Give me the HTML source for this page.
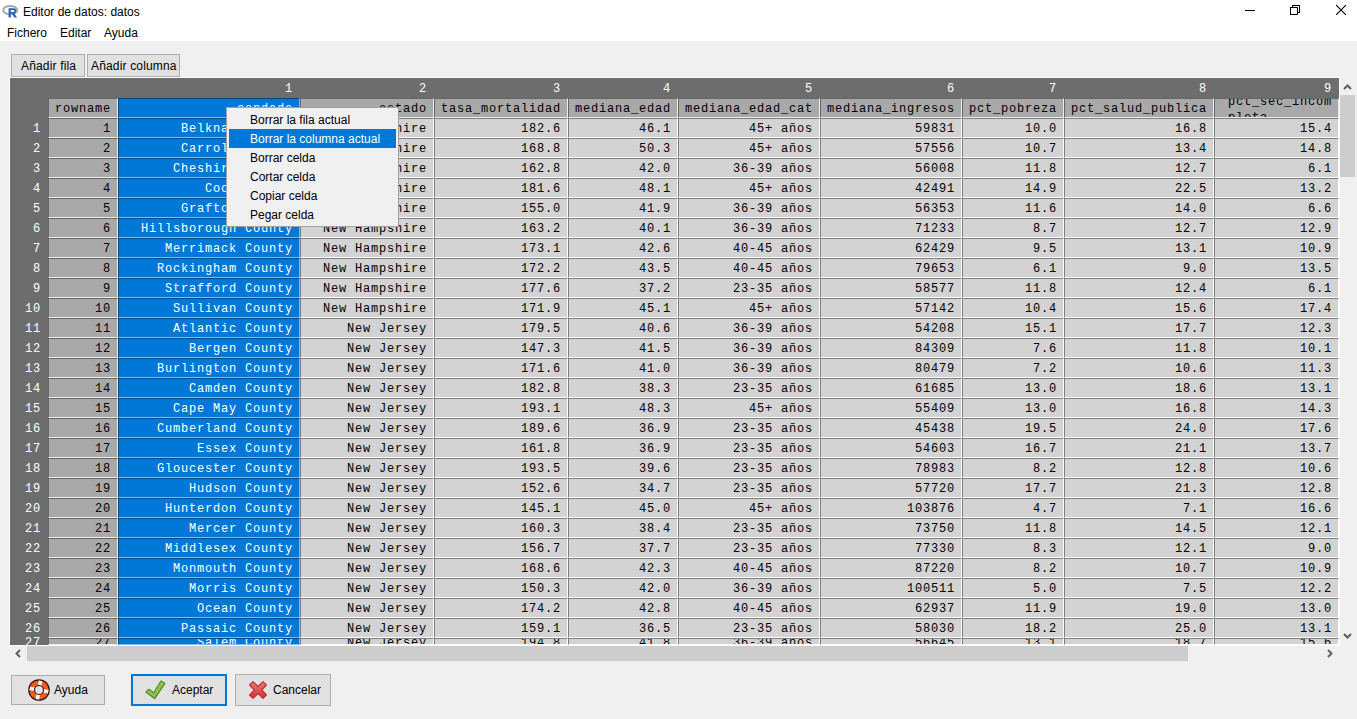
<!DOCTYPE html>
<html><head><meta charset="utf-8"><title>Editor de datos: datos</title>
<style>
html,body{margin:0;padding:0;width:1357px;height:719px;overflow:hidden;background:#f0f0f0;position:relative;font-family:"Liberation Sans",sans-serif;font-size:12px;color:#000}
.abs{position:absolute}
#top{position:absolute;left:0;top:0;width:1357px;height:41px;background:#fff}
.ui{position:absolute;line-height:20px;white-space:nowrap}
.ls{letter-spacing:0.16px}
.btn{position:absolute;box-sizing:border-box;background:#e1e1e1;border:1px solid #adadad}
#grid{position:absolute;left:9px;top:77px;width:1329px;height:567px;border:1px solid #fff;background:#6d6d6d;overflow:hidden}
.c{position:absolute;border:1px solid;font-family:"Liberation Mono",monospace;font-size:12px;letter-spacing:0.8px;line-height:20px;text-align:right;padding-right:0;white-space:nowrap;overflow:hidden}
.c{box-sizing:content-box}
.t{position:absolute;font-family:"Liberation Mono",monospace;font-size:12px;letter-spacing:0.8px;line-height:20px;text-align:right;white-space:nowrap}
.w{color:#fff}
.r27{line-height:8px}
.wrap{position:absolute;right:6px;top:-5px;line-height:16px;text-align:left}
#menu{position:absolute;left:226px;top:107px;width:171px;height:118px;background:#f0f0f0;border:1px solid #a0a0a0}
.mi{position:absolute;left:2px;width:167px;height:19px;line-height:21px;padding-left:21px;box-sizing:border-box;white-space:nowrap}
.mi.sel{background:#0078d7;color:#fff}
.sb{position:absolute;background:#cdcdcd}
</style></head><body>
<div id="top"></div>
<!-- R logo -->
<svg class="abs" style="left:2px;top:5px" width="17" height="13" viewBox="0 0 17 13">
<ellipse cx="8.2" cy="5.2" rx="7" ry="4.2" fill="none" stroke="#a9a9ab" stroke-width="2"/>
<path d="M6.6 3.3 h5.2 a2.6 2.6 0 0 1 0.6 5.1 l2.6 4.2 h-2.7 l-2.3 -4 h-1.2 v4 h-2.2 z M8.8 5 v2 h2.6 a1 1 0 0 0 0 -2 z" fill="#1f63c0" fill-rule="evenodd"/>
</svg>
<div class="ui" style="left:23px;top:2px">Editor de datos: datos</div>
<!-- window controls -->
<div class="abs" style="left:1245px;top:10px;width:10px;height:1px;background:#000"></div>
<div class="abs" style="left:1292px;top:5px;width:6px;height:6px;border:1px solid #000"></div>
<div class="abs" style="left:1290px;top:7px;width:6px;height:6px;border:1px solid #000;background:#fff"></div>
<svg class="abs" style="left:1336px;top:5px" width="10" height="10" viewBox="0 0 10 10"><path d="M0 0 L10 10 M10 0 L0 10" stroke="#000" stroke-width="1.1"/></svg>
<!-- menu bar -->
<div class="ui" style="left:7px;top:23px">Fichero</div>
<div class="ui" style="left:60px;top:23px">Editar</div>
<div class="ui" style="left:104px;top:23px">Ayuda</div>
<!-- toolbar -->
<div class="btn" style="left:11px;top:54px;width:74px;height:23px"></div>
<div class="ui ls" style="left:21px;top:56px">Añadir fila</div>
<div class="btn" style="left:87px;top:54px;width:93px;height:23px"></div>
<div class="ui ls" style="left:91px;top:56px">Añadir columna</div>
<!-- grid -->
<div id="grid">
<div class="t w" style="left:108px;top:1px;width:175px">1</div>
<div class="t w" style="left:290px;top:1px;width:127px">2</div>
<div class="t w" style="left:424px;top:1px;width:127px">3</div>
<div class="t w" style="left:558px;top:1px;width:103px">4</div>
<div class="t w" style="left:668px;top:1px;width:135px">5</div>
<div class="t w" style="left:810px;top:1px;width:135px">6</div>
<div class="t w" style="left:952px;top:1px;width:95px">7</div>
<div class="t w" style="left:1054px;top:1px;width:143px">8</div>
<div class="t w" style="left:1204px;top:1px;width:118px">9</div>
<div class="t w" style="left:0px;top:41px;width:31px">1</div>
<div class="t w" style="left:0px;top:61px;width:31px">2</div>
<div class="t w" style="left:0px;top:81px;width:31px">3</div>
<div class="t w" style="left:0px;top:101px;width:31px">4</div>
<div class="t w" style="left:0px;top:121px;width:31px">5</div>
<div class="t w" style="left:0px;top:141px;width:31px">6</div>
<div class="t w" style="left:0px;top:161px;width:31px">7</div>
<div class="t w" style="left:0px;top:181px;width:31px">8</div>
<div class="t w" style="left:0px;top:201px;width:31px">9</div>
<div class="t w" style="left:0px;top:221px;width:31px">10</div>
<div class="t w" style="left:0px;top:241px;width:31px">11</div>
<div class="t w" style="left:0px;top:261px;width:31px">12</div>
<div class="t w" style="left:0px;top:281px;width:31px">13</div>
<div class="t w" style="left:0px;top:301px;width:31px">14</div>
<div class="t w" style="left:0px;top:321px;width:31px">15</div>
<div class="t w" style="left:0px;top:341px;width:31px">16</div>
<div class="t w" style="left:0px;top:361px;width:31px">17</div>
<div class="t w" style="left:0px;top:381px;width:31px">18</div>
<div class="t w" style="left:0px;top:401px;width:31px">19</div>
<div class="t w" style="left:0px;top:421px;width:31px">20</div>
<div class="t w" style="left:0px;top:441px;width:31px">21</div>
<div class="t w" style="left:0px;top:461px;width:31px">22</div>
<div class="t w" style="left:0px;top:481px;width:31px">23</div>
<div class="t w" style="left:0px;top:501px;width:31px">24</div>
<div class="t w" style="left:0px;top:521px;width:31px">25</div>
<div class="t w" style="left:0px;top:541px;width:31px">26</div>
<div class="t w" style="left:0px;top:561px;width:31px;line-height:8px">27</div>
<div class="c " style="left:38px;top:20px;width:62px;height:18px;padding-right:6px;background:#a9a9a9;border-color:#656565 #ececec #ececec #656565;color:#000">rowname</div>
<div class="c " style="left:108px;top:20px;width:174px;height:18px;padding-right:6px;background:#0078d7;border-color:#004881 #7fbbff #7fbbff #004881;color:#fff">condado</div>
<div class="c " style="left:290px;top:20px;width:126px;height:18px;padding-right:6px;background:#a9a9a9;border-color:#656565 #ececec #ececec #656565;color:#000">estado</div>
<div class="c " style="left:424px;top:20px;width:126px;height:18px;padding-right:6px;background:#a9a9a9;border-color:#656565 #ececec #ececec #656565;color:#000">tasa_mortalidad</div>
<div class="c " style="left:558px;top:20px;width:102px;height:18px;padding-right:6px;background:#a9a9a9;border-color:#656565 #ececec #ececec #656565;color:#000">mediana_edad</div>
<div class="c " style="left:668px;top:20px;width:134px;height:18px;padding-right:6px;background:#a9a9a9;border-color:#656565 #ececec #ececec #656565;color:#000">mediana_edad_cat</div>
<div class="c " style="left:810px;top:20px;width:134px;height:18px;padding-right:6px;background:#a9a9a9;border-color:#656565 #ececec #ececec #656565;color:#000">mediana_ingresos</div>
<div class="c " style="left:952px;top:20px;width:94px;height:18px;padding-right:6px;background:#a9a9a9;border-color:#656565 #ececec #ececec #656565;color:#000">pct_pobreza</div>
<div class="c " style="left:1054px;top:20px;width:142px;height:18px;padding-right:6px;background:#a9a9a9;border-color:#656565 #ececec #ececec #656565;color:#000">pct_salud_publica</div>
<div class="c" style="left:1204px;top:20px;width:123px;height:18px;background:#a9a9a9;border-color:#656565 #ececec #ececec #656565;color:#000"><div class="wrap">pct_sec_incom<br>pleta</div></div>
<div class="c " style="left:38px;top:40px;width:62px;height:18px;padding-right:6px;background:#a9a9a9;border-color:#656565 #ececec #ececec #656565;color:#000">1</div>
<div class="c " style="left:108px;top:40px;width:174px;height:18px;padding-right:6px;background:#0078d7;border-color:#004881 #7fbbff #7fbbff #004881;color:#fff">Belknap County</div>
<div class="c " style="left:290px;top:40px;width:126px;height:18px;padding-right:6px;background:#d3d3d3;border-color:#7e7e7e #ffffff #ffffff #7e7e7e;color:#000">New Hampshire</div>
<div class="c " style="left:424px;top:40px;width:126px;height:18px;padding-right:6px;background:#d3d3d3;border-color:#7e7e7e #ffffff #ffffff #7e7e7e;color:#000">182.6</div>
<div class="c " style="left:558px;top:40px;width:102px;height:18px;padding-right:6px;background:#d3d3d3;border-color:#7e7e7e #ffffff #ffffff #7e7e7e;color:#000">46.1</div>
<div class="c " style="left:668px;top:40px;width:134px;height:18px;padding-right:6px;background:#d3d3d3;border-color:#7e7e7e #ffffff #ffffff #7e7e7e;color:#000">45+ años</div>
<div class="c " style="left:810px;top:40px;width:134px;height:18px;padding-right:6px;background:#d3d3d3;border-color:#7e7e7e #ffffff #ffffff #7e7e7e;color:#000">59831</div>
<div class="c " style="left:952px;top:40px;width:94px;height:18px;padding-right:6px;background:#d3d3d3;border-color:#7e7e7e #ffffff #ffffff #7e7e7e;color:#000">10.0</div>
<div class="c " style="left:1054px;top:40px;width:142px;height:18px;padding-right:6px;background:#d3d3d3;border-color:#7e7e7e #ffffff #ffffff #7e7e7e;color:#000">16.8</div>
<div class="c " style="left:1204px;top:40px;width:117px;height:18px;padding-right:6px;background:#d3d3d3;border-color:#7e7e7e #ffffff #ffffff #7e7e7e;color:#000">15.4</div>
<div class="c " style="left:38px;top:60px;width:62px;height:18px;padding-right:6px;background:#a9a9a9;border-color:#656565 #ececec #ececec #656565;color:#000">2</div>
<div class="c " style="left:108px;top:60px;width:174px;height:18px;padding-right:6px;background:#0078d7;border-color:#004881 #7fbbff #7fbbff #004881;color:#fff">Carroll County</div>
<div class="c " style="left:290px;top:60px;width:126px;height:18px;padding-right:6px;background:#d3d3d3;border-color:#7e7e7e #ffffff #ffffff #7e7e7e;color:#000">New Hampshire</div>
<div class="c " style="left:424px;top:60px;width:126px;height:18px;padding-right:6px;background:#d3d3d3;border-color:#7e7e7e #ffffff #ffffff #7e7e7e;color:#000">168.8</div>
<div class="c " style="left:558px;top:60px;width:102px;height:18px;padding-right:6px;background:#d3d3d3;border-color:#7e7e7e #ffffff #ffffff #7e7e7e;color:#000">50.3</div>
<div class="c " style="left:668px;top:60px;width:134px;height:18px;padding-right:6px;background:#d3d3d3;border-color:#7e7e7e #ffffff #ffffff #7e7e7e;color:#000">45+ años</div>
<div class="c " style="left:810px;top:60px;width:134px;height:18px;padding-right:6px;background:#d3d3d3;border-color:#7e7e7e #ffffff #ffffff #7e7e7e;color:#000">57556</div>
<div class="c " style="left:952px;top:60px;width:94px;height:18px;padding-right:6px;background:#d3d3d3;border-color:#7e7e7e #ffffff #ffffff #7e7e7e;color:#000">10.7</div>
<div class="c " style="left:1054px;top:60px;width:142px;height:18px;padding-right:6px;background:#d3d3d3;border-color:#7e7e7e #ffffff #ffffff #7e7e7e;color:#000">13.4</div>
<div class="c " style="left:1204px;top:60px;width:117px;height:18px;padding-right:6px;background:#d3d3d3;border-color:#7e7e7e #ffffff #ffffff #7e7e7e;color:#000">14.8</div>
<div class="c " style="left:38px;top:80px;width:62px;height:18px;padding-right:6px;background:#a9a9a9;border-color:#656565 #ececec #ececec #656565;color:#000">3</div>
<div class="c " style="left:108px;top:80px;width:174px;height:18px;padding-right:6px;background:#0078d7;border-color:#004881 #7fbbff #7fbbff #004881;color:#fff">Cheshire County</div>
<div class="c " style="left:290px;top:80px;width:126px;height:18px;padding-right:6px;background:#d3d3d3;border-color:#7e7e7e #ffffff #ffffff #7e7e7e;color:#000">New Hampshire</div>
<div class="c " style="left:424px;top:80px;width:126px;height:18px;padding-right:6px;background:#d3d3d3;border-color:#7e7e7e #ffffff #ffffff #7e7e7e;color:#000">162.8</div>
<div class="c " style="left:558px;top:80px;width:102px;height:18px;padding-right:6px;background:#d3d3d3;border-color:#7e7e7e #ffffff #ffffff #7e7e7e;color:#000">42.0</div>
<div class="c " style="left:668px;top:80px;width:134px;height:18px;padding-right:6px;background:#d3d3d3;border-color:#7e7e7e #ffffff #ffffff #7e7e7e;color:#000">36-39 años</div>
<div class="c " style="left:810px;top:80px;width:134px;height:18px;padding-right:6px;background:#d3d3d3;border-color:#7e7e7e #ffffff #ffffff #7e7e7e;color:#000">56008</div>
<div class="c " style="left:952px;top:80px;width:94px;height:18px;padding-right:6px;background:#d3d3d3;border-color:#7e7e7e #ffffff #ffffff #7e7e7e;color:#000">11.8</div>
<div class="c " style="left:1054px;top:80px;width:142px;height:18px;padding-right:6px;background:#d3d3d3;border-color:#7e7e7e #ffffff #ffffff #7e7e7e;color:#000">12.7</div>
<div class="c " style="left:1204px;top:80px;width:117px;height:18px;padding-right:6px;background:#d3d3d3;border-color:#7e7e7e #ffffff #ffffff #7e7e7e;color:#000">6.1</div>
<div class="c " style="left:38px;top:100px;width:62px;height:18px;padding-right:6px;background:#a9a9a9;border-color:#656565 #ececec #ececec #656565;color:#000">4</div>
<div class="c " style="left:108px;top:100px;width:174px;height:18px;padding-right:6px;background:#0078d7;border-color:#004881 #7fbbff #7fbbff #004881;color:#fff">Coos County</div>
<div class="c " style="left:290px;top:100px;width:126px;height:18px;padding-right:6px;background:#d3d3d3;border-color:#7e7e7e #ffffff #ffffff #7e7e7e;color:#000">New Hampshire</div>
<div class="c " style="left:424px;top:100px;width:126px;height:18px;padding-right:6px;background:#d3d3d3;border-color:#7e7e7e #ffffff #ffffff #7e7e7e;color:#000">181.6</div>
<div class="c " style="left:558px;top:100px;width:102px;height:18px;padding-right:6px;background:#d3d3d3;border-color:#7e7e7e #ffffff #ffffff #7e7e7e;color:#000">48.1</div>
<div class="c " style="left:668px;top:100px;width:134px;height:18px;padding-right:6px;background:#d3d3d3;border-color:#7e7e7e #ffffff #ffffff #7e7e7e;color:#000">45+ años</div>
<div class="c " style="left:810px;top:100px;width:134px;height:18px;padding-right:6px;background:#d3d3d3;border-color:#7e7e7e #ffffff #ffffff #7e7e7e;color:#000">42491</div>
<div class="c " style="left:952px;top:100px;width:94px;height:18px;padding-right:6px;background:#d3d3d3;border-color:#7e7e7e #ffffff #ffffff #7e7e7e;color:#000">14.9</div>
<div class="c " style="left:1054px;top:100px;width:142px;height:18px;padding-right:6px;background:#d3d3d3;border-color:#7e7e7e #ffffff #ffffff #7e7e7e;color:#000">22.5</div>
<div class="c " style="left:1204px;top:100px;width:117px;height:18px;padding-right:6px;background:#d3d3d3;border-color:#7e7e7e #ffffff #ffffff #7e7e7e;color:#000">13.2</div>
<div class="c " style="left:38px;top:120px;width:62px;height:18px;padding-right:6px;background:#a9a9a9;border-color:#656565 #ececec #ececec #656565;color:#000">5</div>
<div class="c " style="left:108px;top:120px;width:174px;height:18px;padding-right:6px;background:#0078d7;border-color:#004881 #7fbbff #7fbbff #004881;color:#fff">Grafton County</div>
<div class="c " style="left:290px;top:120px;width:126px;height:18px;padding-right:6px;background:#d3d3d3;border-color:#7e7e7e #ffffff #ffffff #7e7e7e;color:#000">New Hampshire</div>
<div class="c " style="left:424px;top:120px;width:126px;height:18px;padding-right:6px;background:#d3d3d3;border-color:#7e7e7e #ffffff #ffffff #7e7e7e;color:#000">155.0</div>
<div class="c " style="left:558px;top:120px;width:102px;height:18px;padding-right:6px;background:#d3d3d3;border-color:#7e7e7e #ffffff #ffffff #7e7e7e;color:#000">41.9</div>
<div class="c " style="left:668px;top:120px;width:134px;height:18px;padding-right:6px;background:#d3d3d3;border-color:#7e7e7e #ffffff #ffffff #7e7e7e;color:#000">36-39 años</div>
<div class="c " style="left:810px;top:120px;width:134px;height:18px;padding-right:6px;background:#d3d3d3;border-color:#7e7e7e #ffffff #ffffff #7e7e7e;color:#000">56353</div>
<div class="c " style="left:952px;top:120px;width:94px;height:18px;padding-right:6px;background:#d3d3d3;border-color:#7e7e7e #ffffff #ffffff #7e7e7e;color:#000">11.6</div>
<div class="c " style="left:1054px;top:120px;width:142px;height:18px;padding-right:6px;background:#d3d3d3;border-color:#7e7e7e #ffffff #ffffff #7e7e7e;color:#000">14.0</div>
<div class="c " style="left:1204px;top:120px;width:117px;height:18px;padding-right:6px;background:#d3d3d3;border-color:#7e7e7e #ffffff #ffffff #7e7e7e;color:#000">6.6</div>
<div class="c " style="left:38px;top:140px;width:62px;height:18px;padding-right:6px;background:#a9a9a9;border-color:#656565 #ececec #ececec #656565;color:#000">6</div>
<div class="c " style="left:108px;top:140px;width:174px;height:18px;padding-right:6px;background:#0078d7;border-color:#004881 #7fbbff #7fbbff #004881;color:#fff">Hillsborough County</div>
<div class="c " style="left:290px;top:140px;width:126px;height:18px;padding-right:6px;background:#d3d3d3;border-color:#7e7e7e #ffffff #ffffff #7e7e7e;color:#000">New Hampshire</div>
<div class="c " style="left:424px;top:140px;width:126px;height:18px;padding-right:6px;background:#d3d3d3;border-color:#7e7e7e #ffffff #ffffff #7e7e7e;color:#000">163.2</div>
<div class="c " style="left:558px;top:140px;width:102px;height:18px;padding-right:6px;background:#d3d3d3;border-color:#7e7e7e #ffffff #ffffff #7e7e7e;color:#000">40.1</div>
<div class="c " style="left:668px;top:140px;width:134px;height:18px;padding-right:6px;background:#d3d3d3;border-color:#7e7e7e #ffffff #ffffff #7e7e7e;color:#000">36-39 años</div>
<div class="c " style="left:810px;top:140px;width:134px;height:18px;padding-right:6px;background:#d3d3d3;border-color:#7e7e7e #ffffff #ffffff #7e7e7e;color:#000">71233</div>
<div class="c " style="left:952px;top:140px;width:94px;height:18px;padding-right:6px;background:#d3d3d3;border-color:#7e7e7e #ffffff #ffffff #7e7e7e;color:#000">8.7</div>
<div class="c " style="left:1054px;top:140px;width:142px;height:18px;padding-right:6px;background:#d3d3d3;border-color:#7e7e7e #ffffff #ffffff #7e7e7e;color:#000">12.7</div>
<div class="c " style="left:1204px;top:140px;width:117px;height:18px;padding-right:6px;background:#d3d3d3;border-color:#7e7e7e #ffffff #ffffff #7e7e7e;color:#000">12.9</div>
<div class="c " style="left:38px;top:160px;width:62px;height:18px;padding-right:6px;background:#a9a9a9;border-color:#656565 #ececec #ececec #656565;color:#000">7</div>
<div class="c " style="left:108px;top:160px;width:174px;height:18px;padding-right:6px;background:#0078d7;border-color:#004881 #7fbbff #7fbbff #004881;color:#fff">Merrimack County</div>
<div class="c " style="left:290px;top:160px;width:126px;height:18px;padding-right:6px;background:#d3d3d3;border-color:#7e7e7e #ffffff #ffffff #7e7e7e;color:#000">New Hampshire</div>
<div class="c " style="left:424px;top:160px;width:126px;height:18px;padding-right:6px;background:#d3d3d3;border-color:#7e7e7e #ffffff #ffffff #7e7e7e;color:#000">173.1</div>
<div class="c " style="left:558px;top:160px;width:102px;height:18px;padding-right:6px;background:#d3d3d3;border-color:#7e7e7e #ffffff #ffffff #7e7e7e;color:#000">42.6</div>
<div class="c " style="left:668px;top:160px;width:134px;height:18px;padding-right:6px;background:#d3d3d3;border-color:#7e7e7e #ffffff #ffffff #7e7e7e;color:#000">40-45 años</div>
<div class="c " style="left:810px;top:160px;width:134px;height:18px;padding-right:6px;background:#d3d3d3;border-color:#7e7e7e #ffffff #ffffff #7e7e7e;color:#000">62429</div>
<div class="c " style="left:952px;top:160px;width:94px;height:18px;padding-right:6px;background:#d3d3d3;border-color:#7e7e7e #ffffff #ffffff #7e7e7e;color:#000">9.5</div>
<div class="c " style="left:1054px;top:160px;width:142px;height:18px;padding-right:6px;background:#d3d3d3;border-color:#7e7e7e #ffffff #ffffff #7e7e7e;color:#000">13.1</div>
<div class="c " style="left:1204px;top:160px;width:117px;height:18px;padding-right:6px;background:#d3d3d3;border-color:#7e7e7e #ffffff #ffffff #7e7e7e;color:#000">10.9</div>
<div class="c " style="left:38px;top:180px;width:62px;height:18px;padding-right:6px;background:#a9a9a9;border-color:#656565 #ececec #ececec #656565;color:#000">8</div>
<div class="c " style="left:108px;top:180px;width:174px;height:18px;padding-right:6px;background:#0078d7;border-color:#004881 #7fbbff #7fbbff #004881;color:#fff">Rockingham County</div>
<div class="c " style="left:290px;top:180px;width:126px;height:18px;padding-right:6px;background:#d3d3d3;border-color:#7e7e7e #ffffff #ffffff #7e7e7e;color:#000">New Hampshire</div>
<div class="c " style="left:424px;top:180px;width:126px;height:18px;padding-right:6px;background:#d3d3d3;border-color:#7e7e7e #ffffff #ffffff #7e7e7e;color:#000">172.2</div>
<div class="c " style="left:558px;top:180px;width:102px;height:18px;padding-right:6px;background:#d3d3d3;border-color:#7e7e7e #ffffff #ffffff #7e7e7e;color:#000">43.5</div>
<div class="c " style="left:668px;top:180px;width:134px;height:18px;padding-right:6px;background:#d3d3d3;border-color:#7e7e7e #ffffff #ffffff #7e7e7e;color:#000">40-45 años</div>
<div class="c " style="left:810px;top:180px;width:134px;height:18px;padding-right:6px;background:#d3d3d3;border-color:#7e7e7e #ffffff #ffffff #7e7e7e;color:#000">79653</div>
<div class="c " style="left:952px;top:180px;width:94px;height:18px;padding-right:6px;background:#d3d3d3;border-color:#7e7e7e #ffffff #ffffff #7e7e7e;color:#000">6.1</div>
<div class="c " style="left:1054px;top:180px;width:142px;height:18px;padding-right:6px;background:#d3d3d3;border-color:#7e7e7e #ffffff #ffffff #7e7e7e;color:#000">9.0</div>
<div class="c " style="left:1204px;top:180px;width:117px;height:18px;padding-right:6px;background:#d3d3d3;border-color:#7e7e7e #ffffff #ffffff #7e7e7e;color:#000">13.5</div>
<div class="c " style="left:38px;top:200px;width:62px;height:18px;padding-right:6px;background:#a9a9a9;border-color:#656565 #ececec #ececec #656565;color:#000">9</div>
<div class="c " style="left:108px;top:200px;width:174px;height:18px;padding-right:6px;background:#0078d7;border-color:#004881 #7fbbff #7fbbff #004881;color:#fff">Strafford County</div>
<div class="c " style="left:290px;top:200px;width:126px;height:18px;padding-right:6px;background:#d3d3d3;border-color:#7e7e7e #ffffff #ffffff #7e7e7e;color:#000">New Hampshire</div>
<div class="c " style="left:424px;top:200px;width:126px;height:18px;padding-right:6px;background:#d3d3d3;border-color:#7e7e7e #ffffff #ffffff #7e7e7e;color:#000">177.6</div>
<div class="c " style="left:558px;top:200px;width:102px;height:18px;padding-right:6px;background:#d3d3d3;border-color:#7e7e7e #ffffff #ffffff #7e7e7e;color:#000">37.2</div>
<div class="c " style="left:668px;top:200px;width:134px;height:18px;padding-right:6px;background:#d3d3d3;border-color:#7e7e7e #ffffff #ffffff #7e7e7e;color:#000">23-35 años</div>
<div class="c " style="left:810px;top:200px;width:134px;height:18px;padding-right:6px;background:#d3d3d3;border-color:#7e7e7e #ffffff #ffffff #7e7e7e;color:#000">58577</div>
<div class="c " style="left:952px;top:200px;width:94px;height:18px;padding-right:6px;background:#d3d3d3;border-color:#7e7e7e #ffffff #ffffff #7e7e7e;color:#000">11.8</div>
<div class="c " style="left:1054px;top:200px;width:142px;height:18px;padding-right:6px;background:#d3d3d3;border-color:#7e7e7e #ffffff #ffffff #7e7e7e;color:#000">12.4</div>
<div class="c " style="left:1204px;top:200px;width:117px;height:18px;padding-right:6px;background:#d3d3d3;border-color:#7e7e7e #ffffff #ffffff #7e7e7e;color:#000">6.1</div>
<div class="c " style="left:38px;top:220px;width:62px;height:18px;padding-right:6px;background:#a9a9a9;border-color:#656565 #ececec #ececec #656565;color:#000">10</div>
<div class="c " style="left:108px;top:220px;width:174px;height:18px;padding-right:6px;background:#0078d7;border-color:#004881 #7fbbff #7fbbff #004881;color:#fff">Sullivan County</div>
<div class="c " style="left:290px;top:220px;width:126px;height:18px;padding-right:6px;background:#d3d3d3;border-color:#7e7e7e #ffffff #ffffff #7e7e7e;color:#000">New Hampshire</div>
<div class="c " style="left:424px;top:220px;width:126px;height:18px;padding-right:6px;background:#d3d3d3;border-color:#7e7e7e #ffffff #ffffff #7e7e7e;color:#000">171.9</div>
<div class="c " style="left:558px;top:220px;width:102px;height:18px;padding-right:6px;background:#d3d3d3;border-color:#7e7e7e #ffffff #ffffff #7e7e7e;color:#000">45.1</div>
<div class="c " style="left:668px;top:220px;width:134px;height:18px;padding-right:6px;background:#d3d3d3;border-color:#7e7e7e #ffffff #ffffff #7e7e7e;color:#000">45+ años</div>
<div class="c " style="left:810px;top:220px;width:134px;height:18px;padding-right:6px;background:#d3d3d3;border-color:#7e7e7e #ffffff #ffffff #7e7e7e;color:#000">57142</div>
<div class="c " style="left:952px;top:220px;width:94px;height:18px;padding-right:6px;background:#d3d3d3;border-color:#7e7e7e #ffffff #ffffff #7e7e7e;color:#000">10.4</div>
<div class="c " style="left:1054px;top:220px;width:142px;height:18px;padding-right:6px;background:#d3d3d3;border-color:#7e7e7e #ffffff #ffffff #7e7e7e;color:#000">15.6</div>
<div class="c " style="left:1204px;top:220px;width:117px;height:18px;padding-right:6px;background:#d3d3d3;border-color:#7e7e7e #ffffff #ffffff #7e7e7e;color:#000">17.4</div>
<div class="c " style="left:38px;top:240px;width:62px;height:18px;padding-right:6px;background:#a9a9a9;border-color:#656565 #ececec #ececec #656565;color:#000">11</div>
<div class="c " style="left:108px;top:240px;width:174px;height:18px;padding-right:6px;background:#0078d7;border-color:#004881 #7fbbff #7fbbff #004881;color:#fff">Atlantic County</div>
<div class="c " style="left:290px;top:240px;width:126px;height:18px;padding-right:6px;background:#d3d3d3;border-color:#7e7e7e #ffffff #ffffff #7e7e7e;color:#000">New Jersey</div>
<div class="c " style="left:424px;top:240px;width:126px;height:18px;padding-right:6px;background:#d3d3d3;border-color:#7e7e7e #ffffff #ffffff #7e7e7e;color:#000">179.5</div>
<div class="c " style="left:558px;top:240px;width:102px;height:18px;padding-right:6px;background:#d3d3d3;border-color:#7e7e7e #ffffff #ffffff #7e7e7e;color:#000">40.6</div>
<div class="c " style="left:668px;top:240px;width:134px;height:18px;padding-right:6px;background:#d3d3d3;border-color:#7e7e7e #ffffff #ffffff #7e7e7e;color:#000">36-39 años</div>
<div class="c " style="left:810px;top:240px;width:134px;height:18px;padding-right:6px;background:#d3d3d3;border-color:#7e7e7e #ffffff #ffffff #7e7e7e;color:#000">54208</div>
<div class="c " style="left:952px;top:240px;width:94px;height:18px;padding-right:6px;background:#d3d3d3;border-color:#7e7e7e #ffffff #ffffff #7e7e7e;color:#000">15.1</div>
<div class="c " style="left:1054px;top:240px;width:142px;height:18px;padding-right:6px;background:#d3d3d3;border-color:#7e7e7e #ffffff #ffffff #7e7e7e;color:#000">17.7</div>
<div class="c " style="left:1204px;top:240px;width:117px;height:18px;padding-right:6px;background:#d3d3d3;border-color:#7e7e7e #ffffff #ffffff #7e7e7e;color:#000">12.3</div>
<div class="c " style="left:38px;top:260px;width:62px;height:18px;padding-right:6px;background:#a9a9a9;border-color:#656565 #ececec #ececec #656565;color:#000">12</div>
<div class="c " style="left:108px;top:260px;width:174px;height:18px;padding-right:6px;background:#0078d7;border-color:#004881 #7fbbff #7fbbff #004881;color:#fff">Bergen County</div>
<div class="c " style="left:290px;top:260px;width:126px;height:18px;padding-right:6px;background:#d3d3d3;border-color:#7e7e7e #ffffff #ffffff #7e7e7e;color:#000">New Jersey</div>
<div class="c " style="left:424px;top:260px;width:126px;height:18px;padding-right:6px;background:#d3d3d3;border-color:#7e7e7e #ffffff #ffffff #7e7e7e;color:#000">147.3</div>
<div class="c " style="left:558px;top:260px;width:102px;height:18px;padding-right:6px;background:#d3d3d3;border-color:#7e7e7e #ffffff #ffffff #7e7e7e;color:#000">41.5</div>
<div class="c " style="left:668px;top:260px;width:134px;height:18px;padding-right:6px;background:#d3d3d3;border-color:#7e7e7e #ffffff #ffffff #7e7e7e;color:#000">36-39 años</div>
<div class="c " style="left:810px;top:260px;width:134px;height:18px;padding-right:6px;background:#d3d3d3;border-color:#7e7e7e #ffffff #ffffff #7e7e7e;color:#000">84309</div>
<div class="c " style="left:952px;top:260px;width:94px;height:18px;padding-right:6px;background:#d3d3d3;border-color:#7e7e7e #ffffff #ffffff #7e7e7e;color:#000">7.6</div>
<div class="c " style="left:1054px;top:260px;width:142px;height:18px;padding-right:6px;background:#d3d3d3;border-color:#7e7e7e #ffffff #ffffff #7e7e7e;color:#000">11.8</div>
<div class="c " style="left:1204px;top:260px;width:117px;height:18px;padding-right:6px;background:#d3d3d3;border-color:#7e7e7e #ffffff #ffffff #7e7e7e;color:#000">10.1</div>
<div class="c " style="left:38px;top:280px;width:62px;height:18px;padding-right:6px;background:#a9a9a9;border-color:#656565 #ececec #ececec #656565;color:#000">13</div>
<div class="c " style="left:108px;top:280px;width:174px;height:18px;padding-right:6px;background:#0078d7;border-color:#004881 #7fbbff #7fbbff #004881;color:#fff">Burlington County</div>
<div class="c " style="left:290px;top:280px;width:126px;height:18px;padding-right:6px;background:#d3d3d3;border-color:#7e7e7e #ffffff #ffffff #7e7e7e;color:#000">New Jersey</div>
<div class="c " style="left:424px;top:280px;width:126px;height:18px;padding-right:6px;background:#d3d3d3;border-color:#7e7e7e #ffffff #ffffff #7e7e7e;color:#000">171.6</div>
<div class="c " style="left:558px;top:280px;width:102px;height:18px;padding-right:6px;background:#d3d3d3;border-color:#7e7e7e #ffffff #ffffff #7e7e7e;color:#000">41.0</div>
<div class="c " style="left:668px;top:280px;width:134px;height:18px;padding-right:6px;background:#d3d3d3;border-color:#7e7e7e #ffffff #ffffff #7e7e7e;color:#000">36-39 años</div>
<div class="c " style="left:810px;top:280px;width:134px;height:18px;padding-right:6px;background:#d3d3d3;border-color:#7e7e7e #ffffff #ffffff #7e7e7e;color:#000">80479</div>
<div class="c " style="left:952px;top:280px;width:94px;height:18px;padding-right:6px;background:#d3d3d3;border-color:#7e7e7e #ffffff #ffffff #7e7e7e;color:#000">7.2</div>
<div class="c " style="left:1054px;top:280px;width:142px;height:18px;padding-right:6px;background:#d3d3d3;border-color:#7e7e7e #ffffff #ffffff #7e7e7e;color:#000">10.6</div>
<div class="c " style="left:1204px;top:280px;width:117px;height:18px;padding-right:6px;background:#d3d3d3;border-color:#7e7e7e #ffffff #ffffff #7e7e7e;color:#000">11.3</div>
<div class="c " style="left:38px;top:300px;width:62px;height:18px;padding-right:6px;background:#a9a9a9;border-color:#656565 #ececec #ececec #656565;color:#000">14</div>
<div class="c " style="left:108px;top:300px;width:174px;height:18px;padding-right:6px;background:#0078d7;border-color:#004881 #7fbbff #7fbbff #004881;color:#fff">Camden County</div>
<div class="c " style="left:290px;top:300px;width:126px;height:18px;padding-right:6px;background:#d3d3d3;border-color:#7e7e7e #ffffff #ffffff #7e7e7e;color:#000">New Jersey</div>
<div class="c " style="left:424px;top:300px;width:126px;height:18px;padding-right:6px;background:#d3d3d3;border-color:#7e7e7e #ffffff #ffffff #7e7e7e;color:#000">182.8</div>
<div class="c " style="left:558px;top:300px;width:102px;height:18px;padding-right:6px;background:#d3d3d3;border-color:#7e7e7e #ffffff #ffffff #7e7e7e;color:#000">38.3</div>
<div class="c " style="left:668px;top:300px;width:134px;height:18px;padding-right:6px;background:#d3d3d3;border-color:#7e7e7e #ffffff #ffffff #7e7e7e;color:#000">23-35 años</div>
<div class="c " style="left:810px;top:300px;width:134px;height:18px;padding-right:6px;background:#d3d3d3;border-color:#7e7e7e #ffffff #ffffff #7e7e7e;color:#000">61685</div>
<div class="c " style="left:952px;top:300px;width:94px;height:18px;padding-right:6px;background:#d3d3d3;border-color:#7e7e7e #ffffff #ffffff #7e7e7e;color:#000">13.0</div>
<div class="c " style="left:1054px;top:300px;width:142px;height:18px;padding-right:6px;background:#d3d3d3;border-color:#7e7e7e #ffffff #ffffff #7e7e7e;color:#000">18.6</div>
<div class="c " style="left:1204px;top:300px;width:117px;height:18px;padding-right:6px;background:#d3d3d3;border-color:#7e7e7e #ffffff #ffffff #7e7e7e;color:#000">13.1</div>
<div class="c " style="left:38px;top:320px;width:62px;height:18px;padding-right:6px;background:#a9a9a9;border-color:#656565 #ececec #ececec #656565;color:#000">15</div>
<div class="c " style="left:108px;top:320px;width:174px;height:18px;padding-right:6px;background:#0078d7;border-color:#004881 #7fbbff #7fbbff #004881;color:#fff">Cape May County</div>
<div class="c " style="left:290px;top:320px;width:126px;height:18px;padding-right:6px;background:#d3d3d3;border-color:#7e7e7e #ffffff #ffffff #7e7e7e;color:#000">New Jersey</div>
<div class="c " style="left:424px;top:320px;width:126px;height:18px;padding-right:6px;background:#d3d3d3;border-color:#7e7e7e #ffffff #ffffff #7e7e7e;color:#000">193.1</div>
<div class="c " style="left:558px;top:320px;width:102px;height:18px;padding-right:6px;background:#d3d3d3;border-color:#7e7e7e #ffffff #ffffff #7e7e7e;color:#000">48.3</div>
<div class="c " style="left:668px;top:320px;width:134px;height:18px;padding-right:6px;background:#d3d3d3;border-color:#7e7e7e #ffffff #ffffff #7e7e7e;color:#000">45+ años</div>
<div class="c " style="left:810px;top:320px;width:134px;height:18px;padding-right:6px;background:#d3d3d3;border-color:#7e7e7e #ffffff #ffffff #7e7e7e;color:#000">55409</div>
<div class="c " style="left:952px;top:320px;width:94px;height:18px;padding-right:6px;background:#d3d3d3;border-color:#7e7e7e #ffffff #ffffff #7e7e7e;color:#000">13.0</div>
<div class="c " style="left:1054px;top:320px;width:142px;height:18px;padding-right:6px;background:#d3d3d3;border-color:#7e7e7e #ffffff #ffffff #7e7e7e;color:#000">16.8</div>
<div class="c " style="left:1204px;top:320px;width:117px;height:18px;padding-right:6px;background:#d3d3d3;border-color:#7e7e7e #ffffff #ffffff #7e7e7e;color:#000">14.3</div>
<div class="c " style="left:38px;top:340px;width:62px;height:18px;padding-right:6px;background:#a9a9a9;border-color:#656565 #ececec #ececec #656565;color:#000">16</div>
<div class="c " style="left:108px;top:340px;width:174px;height:18px;padding-right:6px;background:#0078d7;border-color:#004881 #7fbbff #7fbbff #004881;color:#fff">Cumberland County</div>
<div class="c " style="left:290px;top:340px;width:126px;height:18px;padding-right:6px;background:#d3d3d3;border-color:#7e7e7e #ffffff #ffffff #7e7e7e;color:#000">New Jersey</div>
<div class="c " style="left:424px;top:340px;width:126px;height:18px;padding-right:6px;background:#d3d3d3;border-color:#7e7e7e #ffffff #ffffff #7e7e7e;color:#000">189.6</div>
<div class="c " style="left:558px;top:340px;width:102px;height:18px;padding-right:6px;background:#d3d3d3;border-color:#7e7e7e #ffffff #ffffff #7e7e7e;color:#000">36.9</div>
<div class="c " style="left:668px;top:340px;width:134px;height:18px;padding-right:6px;background:#d3d3d3;border-color:#7e7e7e #ffffff #ffffff #7e7e7e;color:#000">23-35 años</div>
<div class="c " style="left:810px;top:340px;width:134px;height:18px;padding-right:6px;background:#d3d3d3;border-color:#7e7e7e #ffffff #ffffff #7e7e7e;color:#000">45438</div>
<div class="c " style="left:952px;top:340px;width:94px;height:18px;padding-right:6px;background:#d3d3d3;border-color:#7e7e7e #ffffff #ffffff #7e7e7e;color:#000">19.5</div>
<div class="c " style="left:1054px;top:340px;width:142px;height:18px;padding-right:6px;background:#d3d3d3;border-color:#7e7e7e #ffffff #ffffff #7e7e7e;color:#000">24.0</div>
<div class="c " style="left:1204px;top:340px;width:117px;height:18px;padding-right:6px;background:#d3d3d3;border-color:#7e7e7e #ffffff #ffffff #7e7e7e;color:#000">17.6</div>
<div class="c " style="left:38px;top:360px;width:62px;height:18px;padding-right:6px;background:#a9a9a9;border-color:#656565 #ececec #ececec #656565;color:#000">17</div>
<div class="c " style="left:108px;top:360px;width:174px;height:18px;padding-right:6px;background:#0078d7;border-color:#004881 #7fbbff #7fbbff #004881;color:#fff">Essex County</div>
<div class="c " style="left:290px;top:360px;width:126px;height:18px;padding-right:6px;background:#d3d3d3;border-color:#7e7e7e #ffffff #ffffff #7e7e7e;color:#000">New Jersey</div>
<div class="c " style="left:424px;top:360px;width:126px;height:18px;padding-right:6px;background:#d3d3d3;border-color:#7e7e7e #ffffff #ffffff #7e7e7e;color:#000">161.8</div>
<div class="c " style="left:558px;top:360px;width:102px;height:18px;padding-right:6px;background:#d3d3d3;border-color:#7e7e7e #ffffff #ffffff #7e7e7e;color:#000">36.9</div>
<div class="c " style="left:668px;top:360px;width:134px;height:18px;padding-right:6px;background:#d3d3d3;border-color:#7e7e7e #ffffff #ffffff #7e7e7e;color:#000">23-35 años</div>
<div class="c " style="left:810px;top:360px;width:134px;height:18px;padding-right:6px;background:#d3d3d3;border-color:#7e7e7e #ffffff #ffffff #7e7e7e;color:#000">54603</div>
<div class="c " style="left:952px;top:360px;width:94px;height:18px;padding-right:6px;background:#d3d3d3;border-color:#7e7e7e #ffffff #ffffff #7e7e7e;color:#000">16.7</div>
<div class="c " style="left:1054px;top:360px;width:142px;height:18px;padding-right:6px;background:#d3d3d3;border-color:#7e7e7e #ffffff #ffffff #7e7e7e;color:#000">21.1</div>
<div class="c " style="left:1204px;top:360px;width:117px;height:18px;padding-right:6px;background:#d3d3d3;border-color:#7e7e7e #ffffff #ffffff #7e7e7e;color:#000">13.7</div>
<div class="c " style="left:38px;top:380px;width:62px;height:18px;padding-right:6px;background:#a9a9a9;border-color:#656565 #ececec #ececec #656565;color:#000">18</div>
<div class="c " style="left:108px;top:380px;width:174px;height:18px;padding-right:6px;background:#0078d7;border-color:#004881 #7fbbff #7fbbff #004881;color:#fff">Gloucester County</div>
<div class="c " style="left:290px;top:380px;width:126px;height:18px;padding-right:6px;background:#d3d3d3;border-color:#7e7e7e #ffffff #ffffff #7e7e7e;color:#000">New Jersey</div>
<div class="c " style="left:424px;top:380px;width:126px;height:18px;padding-right:6px;background:#d3d3d3;border-color:#7e7e7e #ffffff #ffffff #7e7e7e;color:#000">193.5</div>
<div class="c " style="left:558px;top:380px;width:102px;height:18px;padding-right:6px;background:#d3d3d3;border-color:#7e7e7e #ffffff #ffffff #7e7e7e;color:#000">39.6</div>
<div class="c " style="left:668px;top:380px;width:134px;height:18px;padding-right:6px;background:#d3d3d3;border-color:#7e7e7e #ffffff #ffffff #7e7e7e;color:#000">23-35 años</div>
<div class="c " style="left:810px;top:380px;width:134px;height:18px;padding-right:6px;background:#d3d3d3;border-color:#7e7e7e #ffffff #ffffff #7e7e7e;color:#000">78983</div>
<div class="c " style="left:952px;top:380px;width:94px;height:18px;padding-right:6px;background:#d3d3d3;border-color:#7e7e7e #ffffff #ffffff #7e7e7e;color:#000">8.2</div>
<div class="c " style="left:1054px;top:380px;width:142px;height:18px;padding-right:6px;background:#d3d3d3;border-color:#7e7e7e #ffffff #ffffff #7e7e7e;color:#000">12.8</div>
<div class="c " style="left:1204px;top:380px;width:117px;height:18px;padding-right:6px;background:#d3d3d3;border-color:#7e7e7e #ffffff #ffffff #7e7e7e;color:#000">10.6</div>
<div class="c " style="left:38px;top:400px;width:62px;height:18px;padding-right:6px;background:#a9a9a9;border-color:#656565 #ececec #ececec #656565;color:#000">19</div>
<div class="c " style="left:108px;top:400px;width:174px;height:18px;padding-right:6px;background:#0078d7;border-color:#004881 #7fbbff #7fbbff #004881;color:#fff">Hudson County</div>
<div class="c " style="left:290px;top:400px;width:126px;height:18px;padding-right:6px;background:#d3d3d3;border-color:#7e7e7e #ffffff #ffffff #7e7e7e;color:#000">New Jersey</div>
<div class="c " style="left:424px;top:400px;width:126px;height:18px;padding-right:6px;background:#d3d3d3;border-color:#7e7e7e #ffffff #ffffff #7e7e7e;color:#000">152.6</div>
<div class="c " style="left:558px;top:400px;width:102px;height:18px;padding-right:6px;background:#d3d3d3;border-color:#7e7e7e #ffffff #ffffff #7e7e7e;color:#000">34.7</div>
<div class="c " style="left:668px;top:400px;width:134px;height:18px;padding-right:6px;background:#d3d3d3;border-color:#7e7e7e #ffffff #ffffff #7e7e7e;color:#000">23-35 años</div>
<div class="c " style="left:810px;top:400px;width:134px;height:18px;padding-right:6px;background:#d3d3d3;border-color:#7e7e7e #ffffff #ffffff #7e7e7e;color:#000">57720</div>
<div class="c " style="left:952px;top:400px;width:94px;height:18px;padding-right:6px;background:#d3d3d3;border-color:#7e7e7e #ffffff #ffffff #7e7e7e;color:#000">17.7</div>
<div class="c " style="left:1054px;top:400px;width:142px;height:18px;padding-right:6px;background:#d3d3d3;border-color:#7e7e7e #ffffff #ffffff #7e7e7e;color:#000">21.3</div>
<div class="c " style="left:1204px;top:400px;width:117px;height:18px;padding-right:6px;background:#d3d3d3;border-color:#7e7e7e #ffffff #ffffff #7e7e7e;color:#000">12.8</div>
<div class="c " style="left:38px;top:420px;width:62px;height:18px;padding-right:6px;background:#a9a9a9;border-color:#656565 #ececec #ececec #656565;color:#000">20</div>
<div class="c " style="left:108px;top:420px;width:174px;height:18px;padding-right:6px;background:#0078d7;border-color:#004881 #7fbbff #7fbbff #004881;color:#fff">Hunterdon County</div>
<div class="c " style="left:290px;top:420px;width:126px;height:18px;padding-right:6px;background:#d3d3d3;border-color:#7e7e7e #ffffff #ffffff #7e7e7e;color:#000">New Jersey</div>
<div class="c " style="left:424px;top:420px;width:126px;height:18px;padding-right:6px;background:#d3d3d3;border-color:#7e7e7e #ffffff #ffffff #7e7e7e;color:#000">145.1</div>
<div class="c " style="left:558px;top:420px;width:102px;height:18px;padding-right:6px;background:#d3d3d3;border-color:#7e7e7e #ffffff #ffffff #7e7e7e;color:#000">45.0</div>
<div class="c " style="left:668px;top:420px;width:134px;height:18px;padding-right:6px;background:#d3d3d3;border-color:#7e7e7e #ffffff #ffffff #7e7e7e;color:#000">45+ años</div>
<div class="c " style="left:810px;top:420px;width:134px;height:18px;padding-right:6px;background:#d3d3d3;border-color:#7e7e7e #ffffff #ffffff #7e7e7e;color:#000">103876</div>
<div class="c " style="left:952px;top:420px;width:94px;height:18px;padding-right:6px;background:#d3d3d3;border-color:#7e7e7e #ffffff #ffffff #7e7e7e;color:#000">4.7</div>
<div class="c " style="left:1054px;top:420px;width:142px;height:18px;padding-right:6px;background:#d3d3d3;border-color:#7e7e7e #ffffff #ffffff #7e7e7e;color:#000">7.1</div>
<div class="c " style="left:1204px;top:420px;width:117px;height:18px;padding-right:6px;background:#d3d3d3;border-color:#7e7e7e #ffffff #ffffff #7e7e7e;color:#000">16.6</div>
<div class="c " style="left:38px;top:440px;width:62px;height:18px;padding-right:6px;background:#a9a9a9;border-color:#656565 #ececec #ececec #656565;color:#000">21</div>
<div class="c " style="left:108px;top:440px;width:174px;height:18px;padding-right:6px;background:#0078d7;border-color:#004881 #7fbbff #7fbbff #004881;color:#fff">Mercer County</div>
<div class="c " style="left:290px;top:440px;width:126px;height:18px;padding-right:6px;background:#d3d3d3;border-color:#7e7e7e #ffffff #ffffff #7e7e7e;color:#000">New Jersey</div>
<div class="c " style="left:424px;top:440px;width:126px;height:18px;padding-right:6px;background:#d3d3d3;border-color:#7e7e7e #ffffff #ffffff #7e7e7e;color:#000">160.3</div>
<div class="c " style="left:558px;top:440px;width:102px;height:18px;padding-right:6px;background:#d3d3d3;border-color:#7e7e7e #ffffff #ffffff #7e7e7e;color:#000">38.4</div>
<div class="c " style="left:668px;top:440px;width:134px;height:18px;padding-right:6px;background:#d3d3d3;border-color:#7e7e7e #ffffff #ffffff #7e7e7e;color:#000">23-35 años</div>
<div class="c " style="left:810px;top:440px;width:134px;height:18px;padding-right:6px;background:#d3d3d3;border-color:#7e7e7e #ffffff #ffffff #7e7e7e;color:#000">73750</div>
<div class="c " style="left:952px;top:440px;width:94px;height:18px;padding-right:6px;background:#d3d3d3;border-color:#7e7e7e #ffffff #ffffff #7e7e7e;color:#000">11.8</div>
<div class="c " style="left:1054px;top:440px;width:142px;height:18px;padding-right:6px;background:#d3d3d3;border-color:#7e7e7e #ffffff #ffffff #7e7e7e;color:#000">14.5</div>
<div class="c " style="left:1204px;top:440px;width:117px;height:18px;padding-right:6px;background:#d3d3d3;border-color:#7e7e7e #ffffff #ffffff #7e7e7e;color:#000">12.1</div>
<div class="c " style="left:38px;top:460px;width:62px;height:18px;padding-right:6px;background:#a9a9a9;border-color:#656565 #ececec #ececec #656565;color:#000">22</div>
<div class="c " style="left:108px;top:460px;width:174px;height:18px;padding-right:6px;background:#0078d7;border-color:#004881 #7fbbff #7fbbff #004881;color:#fff">Middlesex County</div>
<div class="c " style="left:290px;top:460px;width:126px;height:18px;padding-right:6px;background:#d3d3d3;border-color:#7e7e7e #ffffff #ffffff #7e7e7e;color:#000">New Jersey</div>
<div class="c " style="left:424px;top:460px;width:126px;height:18px;padding-right:6px;background:#d3d3d3;border-color:#7e7e7e #ffffff #ffffff #7e7e7e;color:#000">156.7</div>
<div class="c " style="left:558px;top:460px;width:102px;height:18px;padding-right:6px;background:#d3d3d3;border-color:#7e7e7e #ffffff #ffffff #7e7e7e;color:#000">37.7</div>
<div class="c " style="left:668px;top:460px;width:134px;height:18px;padding-right:6px;background:#d3d3d3;border-color:#7e7e7e #ffffff #ffffff #7e7e7e;color:#000">23-35 años</div>
<div class="c " style="left:810px;top:460px;width:134px;height:18px;padding-right:6px;background:#d3d3d3;border-color:#7e7e7e #ffffff #ffffff #7e7e7e;color:#000">77330</div>
<div class="c " style="left:952px;top:460px;width:94px;height:18px;padding-right:6px;background:#d3d3d3;border-color:#7e7e7e #ffffff #ffffff #7e7e7e;color:#000">8.3</div>
<div class="c " style="left:1054px;top:460px;width:142px;height:18px;padding-right:6px;background:#d3d3d3;border-color:#7e7e7e #ffffff #ffffff #7e7e7e;color:#000">12.1</div>
<div class="c " style="left:1204px;top:460px;width:117px;height:18px;padding-right:6px;background:#d3d3d3;border-color:#7e7e7e #ffffff #ffffff #7e7e7e;color:#000">9.0</div>
<div class="c " style="left:38px;top:480px;width:62px;height:18px;padding-right:6px;background:#a9a9a9;border-color:#656565 #ececec #ececec #656565;color:#000">23</div>
<div class="c " style="left:108px;top:480px;width:174px;height:18px;padding-right:6px;background:#0078d7;border-color:#004881 #7fbbff #7fbbff #004881;color:#fff">Monmouth County</div>
<div class="c " style="left:290px;top:480px;width:126px;height:18px;padding-right:6px;background:#d3d3d3;border-color:#7e7e7e #ffffff #ffffff #7e7e7e;color:#000">New Jersey</div>
<div class="c " style="left:424px;top:480px;width:126px;height:18px;padding-right:6px;background:#d3d3d3;border-color:#7e7e7e #ffffff #ffffff #7e7e7e;color:#000">168.6</div>
<div class="c " style="left:558px;top:480px;width:102px;height:18px;padding-right:6px;background:#d3d3d3;border-color:#7e7e7e #ffffff #ffffff #7e7e7e;color:#000">42.3</div>
<div class="c " style="left:668px;top:480px;width:134px;height:18px;padding-right:6px;background:#d3d3d3;border-color:#7e7e7e #ffffff #ffffff #7e7e7e;color:#000">40-45 años</div>
<div class="c " style="left:810px;top:480px;width:134px;height:18px;padding-right:6px;background:#d3d3d3;border-color:#7e7e7e #ffffff #ffffff #7e7e7e;color:#000">87220</div>
<div class="c " style="left:952px;top:480px;width:94px;height:18px;padding-right:6px;background:#d3d3d3;border-color:#7e7e7e #ffffff #ffffff #7e7e7e;color:#000">8.2</div>
<div class="c " style="left:1054px;top:480px;width:142px;height:18px;padding-right:6px;background:#d3d3d3;border-color:#7e7e7e #ffffff #ffffff #7e7e7e;color:#000">10.7</div>
<div class="c " style="left:1204px;top:480px;width:117px;height:18px;padding-right:6px;background:#d3d3d3;border-color:#7e7e7e #ffffff #ffffff #7e7e7e;color:#000">10.9</div>
<div class="c " style="left:38px;top:500px;width:62px;height:18px;padding-right:6px;background:#a9a9a9;border-color:#656565 #ececec #ececec #656565;color:#000">24</div>
<div class="c " style="left:108px;top:500px;width:174px;height:18px;padding-right:6px;background:#0078d7;border-color:#004881 #7fbbff #7fbbff #004881;color:#fff">Morris County</div>
<div class="c " style="left:290px;top:500px;width:126px;height:18px;padding-right:6px;background:#d3d3d3;border-color:#7e7e7e #ffffff #ffffff #7e7e7e;color:#000">New Jersey</div>
<div class="c " style="left:424px;top:500px;width:126px;height:18px;padding-right:6px;background:#d3d3d3;border-color:#7e7e7e #ffffff #ffffff #7e7e7e;color:#000">150.3</div>
<div class="c " style="left:558px;top:500px;width:102px;height:18px;padding-right:6px;background:#d3d3d3;border-color:#7e7e7e #ffffff #ffffff #7e7e7e;color:#000">42.0</div>
<div class="c " style="left:668px;top:500px;width:134px;height:18px;padding-right:6px;background:#d3d3d3;border-color:#7e7e7e #ffffff #ffffff #7e7e7e;color:#000">36-39 años</div>
<div class="c " style="left:810px;top:500px;width:134px;height:18px;padding-right:6px;background:#d3d3d3;border-color:#7e7e7e #ffffff #ffffff #7e7e7e;color:#000">100511</div>
<div class="c " style="left:952px;top:500px;width:94px;height:18px;padding-right:6px;background:#d3d3d3;border-color:#7e7e7e #ffffff #ffffff #7e7e7e;color:#000">5.0</div>
<div class="c " style="left:1054px;top:500px;width:142px;height:18px;padding-right:6px;background:#d3d3d3;border-color:#7e7e7e #ffffff #ffffff #7e7e7e;color:#000">7.5</div>
<div class="c " style="left:1204px;top:500px;width:117px;height:18px;padding-right:6px;background:#d3d3d3;border-color:#7e7e7e #ffffff #ffffff #7e7e7e;color:#000">12.2</div>
<div class="c " style="left:38px;top:520px;width:62px;height:18px;padding-right:6px;background:#a9a9a9;border-color:#656565 #ececec #ececec #656565;color:#000">25</div>
<div class="c " style="left:108px;top:520px;width:174px;height:18px;padding-right:6px;background:#0078d7;border-color:#004881 #7fbbff #7fbbff #004881;color:#fff">Ocean County</div>
<div class="c " style="left:290px;top:520px;width:126px;height:18px;padding-right:6px;background:#d3d3d3;border-color:#7e7e7e #ffffff #ffffff #7e7e7e;color:#000">New Jersey</div>
<div class="c " style="left:424px;top:520px;width:126px;height:18px;padding-right:6px;background:#d3d3d3;border-color:#7e7e7e #ffffff #ffffff #7e7e7e;color:#000">174.2</div>
<div class="c " style="left:558px;top:520px;width:102px;height:18px;padding-right:6px;background:#d3d3d3;border-color:#7e7e7e #ffffff #ffffff #7e7e7e;color:#000">42.8</div>
<div class="c " style="left:668px;top:520px;width:134px;height:18px;padding-right:6px;background:#d3d3d3;border-color:#7e7e7e #ffffff #ffffff #7e7e7e;color:#000">40-45 años</div>
<div class="c " style="left:810px;top:520px;width:134px;height:18px;padding-right:6px;background:#d3d3d3;border-color:#7e7e7e #ffffff #ffffff #7e7e7e;color:#000">62937</div>
<div class="c " style="left:952px;top:520px;width:94px;height:18px;padding-right:6px;background:#d3d3d3;border-color:#7e7e7e #ffffff #ffffff #7e7e7e;color:#000">11.9</div>
<div class="c " style="left:1054px;top:520px;width:142px;height:18px;padding-right:6px;background:#d3d3d3;border-color:#7e7e7e #ffffff #ffffff #7e7e7e;color:#000">19.0</div>
<div class="c " style="left:1204px;top:520px;width:117px;height:18px;padding-right:6px;background:#d3d3d3;border-color:#7e7e7e #ffffff #ffffff #7e7e7e;color:#000">13.0</div>
<div class="c " style="left:38px;top:540px;width:62px;height:18px;padding-right:6px;background:#a9a9a9;border-color:#656565 #ececec #ececec #656565;color:#000">26</div>
<div class="c " style="left:108px;top:540px;width:174px;height:18px;padding-right:6px;background:#0078d7;border-color:#004881 #7fbbff #7fbbff #004881;color:#fff">Passaic County</div>
<div class="c " style="left:290px;top:540px;width:126px;height:18px;padding-right:6px;background:#d3d3d3;border-color:#7e7e7e #ffffff #ffffff #7e7e7e;color:#000">New Jersey</div>
<div class="c " style="left:424px;top:540px;width:126px;height:18px;padding-right:6px;background:#d3d3d3;border-color:#7e7e7e #ffffff #ffffff #7e7e7e;color:#000">159.1</div>
<div class="c " style="left:558px;top:540px;width:102px;height:18px;padding-right:6px;background:#d3d3d3;border-color:#7e7e7e #ffffff #ffffff #7e7e7e;color:#000">36.5</div>
<div class="c " style="left:668px;top:540px;width:134px;height:18px;padding-right:6px;background:#d3d3d3;border-color:#7e7e7e #ffffff #ffffff #7e7e7e;color:#000">23-35 años</div>
<div class="c " style="left:810px;top:540px;width:134px;height:18px;padding-right:6px;background:#d3d3d3;border-color:#7e7e7e #ffffff #ffffff #7e7e7e;color:#000">58030</div>
<div class="c " style="left:952px;top:540px;width:94px;height:18px;padding-right:6px;background:#d3d3d3;border-color:#7e7e7e #ffffff #ffffff #7e7e7e;color:#000">18.2</div>
<div class="c " style="left:1054px;top:540px;width:142px;height:18px;padding-right:6px;background:#d3d3d3;border-color:#7e7e7e #ffffff #ffffff #7e7e7e;color:#000">25.0</div>
<div class="c " style="left:1204px;top:540px;width:117px;height:18px;padding-right:6px;background:#d3d3d3;border-color:#7e7e7e #ffffff #ffffff #7e7e7e;color:#000">13.1</div>
<div class="c r27" style="left:38px;top:560px;width:62px;height:5px;padding-right:6px;background:#a9a9a9;border-color:#656565 #ececec #ececec #656565;color:#000">27</div>
<div class="c r27" style="left:108px;top:560px;width:174px;height:5px;padding-right:6px;background:#0078d7;border-color:#004881 #7fbbff #7fbbff #004881;color:#fff">Salem County</div>
<div class="c r27" style="left:290px;top:560px;width:126px;height:5px;padding-right:6px;background:#d3d3d3;border-color:#7e7e7e #ffffff #ffffff #7e7e7e;color:#000">New Jersey</div>
<div class="c r27" style="left:424px;top:560px;width:126px;height:5px;padding-right:6px;background:#d3d3d3;border-color:#7e7e7e #ffffff #ffffff #7e7e7e;color:#000">194.8</div>
<div class="c r27" style="left:558px;top:560px;width:102px;height:5px;padding-right:6px;background:#d3d3d3;border-color:#7e7e7e #ffffff #ffffff #7e7e7e;color:#000">41.8</div>
<div class="c r27" style="left:668px;top:560px;width:134px;height:5px;padding-right:6px;background:#d3d3d3;border-color:#7e7e7e #ffffff #ffffff #7e7e7e;color:#000">36-39 años</div>
<div class="c r27" style="left:810px;top:560px;width:134px;height:5px;padding-right:6px;background:#d3d3d3;border-color:#7e7e7e #ffffff #ffffff #7e7e7e;color:#000">56645</div>
<div class="c r27" style="left:952px;top:560px;width:94px;height:5px;padding-right:6px;background:#d3d3d3;border-color:#7e7e7e #ffffff #ffffff #7e7e7e;color:#000">13.1</div>
<div class="c r27" style="left:1054px;top:560px;width:142px;height:5px;padding-right:6px;background:#d3d3d3;border-color:#7e7e7e #ffffff #ffffff #7e7e7e;color:#000">18.7</div>
<div class="c r27" style="left:1204px;top:560px;width:117px;height:5px;padding-right:6px;background:#d3d3d3;border-color:#7e7e7e #ffffff #ffffff #7e7e7e;color:#000">15.6</div>
</div>
<!-- vertical scrollbar -->
<div class="sb" style="left:1340px;top:95px;width:15px;height:82px"></div>
<svg class="abs" style="left:1343px;top:83px" width="10" height="8" viewBox="0 0 10 8"><path d="M1 6 L4.5 2.5 L8 6" fill="none" stroke="#606060" stroke-width="2"/></svg>
<svg class="abs" style="left:1343px;top:632px" width="10" height="8" viewBox="0 0 10 8"><path d="M1 2 L4.5 5.5 L8 2" fill="none" stroke="#606060" stroke-width="2"/></svg>
<!-- horizontal scrollbar -->
<div class="sb" style="left:27px;top:646px;width:1161px;height:15px"></div>
<svg class="abs" style="left:14px;top:649px" width="8" height="10" viewBox="0 0 8 10"><path d="M6 1 L2.5 4.5 L6 8" fill="none" stroke="#606060" stroke-width="2"/></svg>
<svg class="abs" style="left:1326px;top:649px" width="8" height="10" viewBox="0 0 8 10"><path d="M2 1 L5.5 4.5 L2 8" fill="none" stroke="#606060" stroke-width="2"/></svg>
<!-- context menu -->
<div id="menu"><div class="mi" style="top:2px">Borrar la fila actual</div><div class="mi sel" style="top:21px">Borrar la columna actual</div><div class="mi" style="top:40px">Borrar celda</div><div class="mi" style="top:59px">Cortar celda</div><div class="mi" style="top:78px">Copiar celda</div><div class="mi" style="top:97px">Pegar celda</div></div>
<!-- bottom buttons -->
<div class="btn" style="left:11px;top:675px;width:94px;height:30px"></div>
<svg class="abs" style="left:28px;top:679px" width="22" height="22" viewBox="0 0 22 22">
<defs><clipPath id="ring"><circle cx="11" cy="11" r="9.6"/></clipPath></defs>
<circle cx="11" cy="11" r="10.8" fill="#2e1410"/>
<circle cx="11" cy="11" r="9.6" fill="#f25a1e"/>
<g clip-path="url(#ring)" stroke="#f4f4f4" stroke-width="3.6">
<line x1="0" y1="9.1" x2="22" y2="12.9"/><line x1="12.9" y1="0" x2="9.1" y2="22"/>
</g>
<circle cx="11" cy="11" r="5" fill="#2e1410"/>
<circle cx="11" cy="11" r="3.9" fill="#e1e1e1"/>
</svg>
<div class="ui" style="left:54px;top:680px">Ayuda</div>
<div class="btn" style="left:131px;top:674px;width:96px;height:32px;border:2px solid #0078d7"></div>
<svg class="abs" style="left:145px;top:679px" width="22" height="22" viewBox="0 0 22 22">
<defs><linearGradient id="gg" x1="0" y1="0" x2="1" y2="1"><stop offset="0" stop-color="#b4dc78"/><stop offset="1" stop-color="#6ea832"/></linearGradient></defs>
<path d="M0.9 13 L3.9 10.2 L8.6 13.7 L16 2 L19.9 4.4 L9.8 19.8 Z" fill="url(#gg)" stroke="#4b8a1c" stroke-width="1.1" stroke-linejoin="round"/>
</svg>
<div class="ui" style="left:172px;top:680px">Aceptar</div>
<div class="btn" style="left:235px;top:674px;width:96px;height:32px"></div>
<svg class="abs" style="left:249px;top:681px" width="18" height="18" viewBox="0 0 18 18">
<defs><linearGradient id="rg" x1="0" y1="0" x2="0" y2="1"><stop offset="0" stop-color="#ea7a7a"/><stop offset="1" stop-color="#cf3434"/></linearGradient></defs>
<path d="M0.6 4 L4 0.6 L9 5.3 L14 0.6 L17.4 4 L12.7 9 L17.4 14 L14 17.4 L9 12.7 L4 17.4 L0.6 14 L5.3 9 Z" fill="url(#rg)" stroke="#c0282b" stroke-width="1.1" stroke-linejoin="round"/>
</svg>
<div class="ui" style="left:273px;top:680px">Cancelar</div>
</body></html>
